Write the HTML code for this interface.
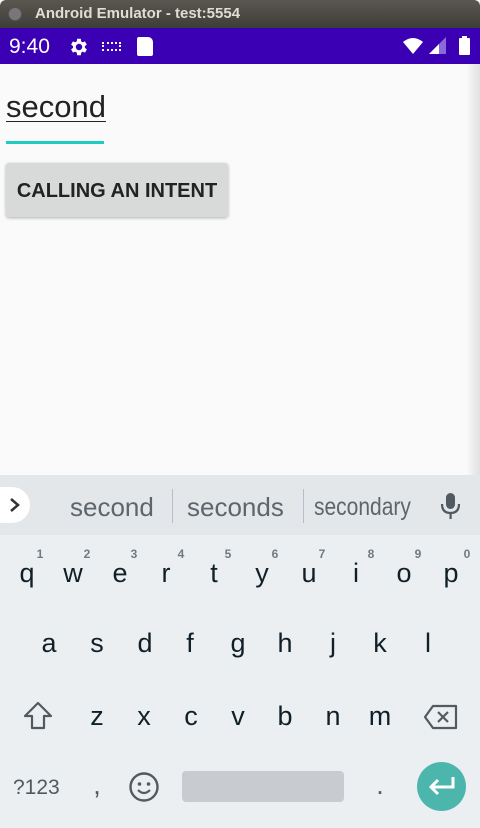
<!DOCTYPE html><html><head><style>
*{margin:0;padding:0;box-sizing:border-box}
body{width:480px;height:828px;position:relative;overflow:hidden;background:#fafafa;font-family:"Liberation Sans",sans-serif}
.a{position:absolute}
.k{position:absolute;font-size:27px;color:#102028;transform:translateX(-50%);line-height:1}
.n{position:absolute;font-size:12px;color:#707a80;font-weight:bold;transform:translateX(-50%)}
</style></head><body>
<div class="a" style="left:0;top:0;width:480px;height:28px;background:linear-gradient(#5a5750,#3f3d38);border-radius:6px 6px 0 0"></div>
<div class="a" style="left:8px;top:7px;width:14px;height:14px;border-radius:50%;background:#777;border:1px solid #555"></div>
<div class="a" style="left:35px;top:5px;color:#e0ddd5;font-size:15px;font-weight:bold">Android Emulator - test:5554</div>
<div class="a" style="left:0;top:28px;width:480px;height:36px;background:#3c00b4"></div>
<div class="a" style="left:9px;top:35px;color:#fff;font-size:21px">9:40</div>
<svg class="a" style="left:68px;top:36px" width="22" height="22" viewBox="0 0 24 24"><path fill="#fff" d="M19.4 13a7.5 7.5 0 000-2l2.1-1.6-2-3.5-2.5 1a7 7 0 00-1.7-1L15 3h-4l-.4 2.9a7 7 0 00-1.7 1l-2.5-1-2 3.5L6.5 11a7.5 7.5 0 000 2l-2.1 1.6 2 3.5 2.5-1a7 7 0 001.7 1L11 21h4l.4-2.9a7 7 0 001.7-1l2.5 1 2-3.5zM13 15.5a3.5 3.5 0 110-7 3.5 3.5 0 010 7z" transform="translate(-1 0)"/></svg>
<div class="a" style="left:102px;top:42px;width:19px;height:9px;border:2px dotted #fff"></div>
<div class="a" style="left:137px;top:37px;width:16px;height:19px;background:#fff;border-radius:2px 5px 2px 2px"></div>
<svg class="a" style="left:402px;top:36px" width="72" height="20"><path d="M1 6 Q11 -2 21 6 L11 18Z" fill="#fff"/><path d="M27 18 L44 1 L44 18Z" fill="#8a6ad8"/><path d="M27 18 L37 8 L37 18Z" fill="#fff"/><rect x="57" y="2" width="11" height="17" rx="1" fill="#fff"/><rect x="60" y="0" width="5" height="3" fill="#fff"/></svg>
<div class="a" style="left:466px;top:64px;width:14px;height:764px;background:linear-gradient(90deg,rgba(0,0,0,0),rgba(0,0,0,.1))"></div>
<div class="a" style="left:6px;top:89px;font-size:31px;color:#222;text-decoration:underline;text-decoration-thickness:1px;text-underline-offset:4px">second</div>
<div class="a" style="left:6px;top:141px;width:98px;height:3px;background:#1ecbc0"></div>
<div class="a" style="left:6px;top:163px;width:222px;height:54px;background:#d8d9d9;border-radius:3px;box-shadow:0 1px 3px rgba(0,0,0,.3);font-size:20px;font-weight:bold;color:#222;text-align:center;line-height:56px">CALLING AN INTENT</div>
<div class="a" style="left:0;top:475px;width:480px;height:60px;background:#e4e7ea"></div>
<div class="a" style="left:0;top:535px;width:480px;height:293px;background:#eceff1"></div>
<div class="a" style="left:0;top:487px;width:30px;height:36px;background:#fff;border-radius:0 18px 18px 0"></div>
<svg class="a" style="left:8px;top:497px" width="14" height="16"><path d="M3 2 L10 8 L3 14" stroke="#333" stroke-width="2.5" fill="none"/></svg>
<div class="a" style="left:70px;top:492px;font-size:26px;color:#5d666c">second</div>
<div class="a" style="left:172px;top:489px;width:1px;height:34px;background:#bbc"></div>
<div class="a" style="left:187px;top:492px;font-size:26px;color:#5d666c">seconds</div>
<div class="a" style="left:303px;top:489px;width:1px;height:34px;background:#bbc"></div>
<div class="a" style="left:314px;top:493px;font-size:25px;color:#5d666c;transform:scaleX(.84);transform-origin:left">secondary</div>
<svg class="a" style="left:440px;top:492px" width="22" height="30"><rect x="6" y="1" width="9" height="16" rx="4.5" fill="#505a60"/><path d="M2 12 Q2 21 10.5 21 Q19 21 19 12" stroke="#505a60" stroke-width="2.2" fill="none"/><rect x="9.5" y="20" width="2.2" height="7" fill="#505a60"/></svg>
<div class="k" style="left:27px;top:560px">q</div><div class="n" style="left:40px;top:547px">1</div>
<div class="k" style="left:73px;top:560px">w</div><div class="n" style="left:87px;top:547px">2</div>
<div class="k" style="left:120px;top:560px">e</div><div class="n" style="left:134px;top:547px">3</div>
<div class="k" style="left:166px;top:560px">r</div><div class="n" style="left:181px;top:547px">4</div>
<div class="k" style="left:214px;top:560px">t</div><div class="n" style="left:228px;top:547px">5</div>
<div class="k" style="left:262px;top:560px">y</div><div class="n" style="left:275px;top:547px">6</div>
<div class="k" style="left:309px;top:560px">u</div><div class="n" style="left:322px;top:547px">7</div>
<div class="k" style="left:356px;top:560px">i</div><div class="n" style="left:371px;top:547px">8</div>
<div class="k" style="left:404px;top:560px">o</div><div class="n" style="left:418px;top:547px">9</div>
<div class="k" style="left:451px;top:560px">p</div><div class="n" style="left:467px;top:547px">0</div>
<div class="k" style="left:49px;top:630px">a</div><div class="k" style="left:97px;top:630px">s</div><div class="k" style="left:145px;top:630px">d</div><div class="k" style="left:190px;top:630px">f</div><div class="k" style="left:238px;top:630px">g</div><div class="k" style="left:285px;top:630px">h</div><div class="k" style="left:333px;top:630px">j</div><div class="k" style="left:380px;top:630px">k</div><div class="k" style="left:428px;top:630px">l</div>
<svg class="a" style="left:22px;top:701px" width="32" height="30"><path d="M16 2 L29 15 L22 15 L22 27 L10 27 L10 15 L3 15Z" stroke="#505a60" stroke-width="2.2" fill="none" stroke-linejoin="round"/></svg>
<div class="k" style="left:97px;top:703px">z</div><div class="k" style="left:144px;top:703px">x</div><div class="k" style="left:191px;top:703px">c</div><div class="k" style="left:238px;top:703px">v</div><div class="k" style="left:285px;top:703px">b</div><div class="k" style="left:333px;top:703px">n</div><div class="k" style="left:380px;top:703px">m</div>
<svg class="a" style="left:423px;top:704px" width="36" height="26"><path d="M10 2 L33 2 L33 24 L10 24 L2 13Z" stroke="#505a60" stroke-width="2.2" fill="none" stroke-linejoin="round"/><path d="M15 8 L25 18 M25 8 L15 18" stroke="#505a60" stroke-width="2.2"/></svg>
<div class="a" style="left:13px;top:776px;font-size:21px;color:#505a60">?123</div>
<div class="k" style="left:97px;top:772px;color:#505a60">,</div>
<svg class="a" style="left:128px;top:771px" width="32" height="32"><circle cx="16" cy="16" r="13.5" stroke="#505a60" stroke-width="2.4" fill="none"/><circle cx="11.5" cy="13" r="1.8" fill="#505a60"/><circle cx="20.5" cy="13" r="1.8" fill="#505a60"/><path d="M10 19 Q16 25 22 19" stroke="#505a60" stroke-width="2.2" fill="none"/></svg>
<div class="a" style="left:182px;top:771px;width:162px;height:31px;background:#c8ccd0;border-radius:4px"></div>
<div class="k" style="left:380px;top:772px;color:#505a60">.</div>
<div class="a" style="left:417px;top:762px;width:49px;height:49px;border-radius:50%;background:#4db6ac"></div>
<svg class="a" style="left:426px;top:774px" width="32" height="26"><path d="M27 3 L27 13 L6 13 M12 6 L5 13 L12 20" stroke="#fff" stroke-width="3" fill="none"/></svg>
</body></html>
